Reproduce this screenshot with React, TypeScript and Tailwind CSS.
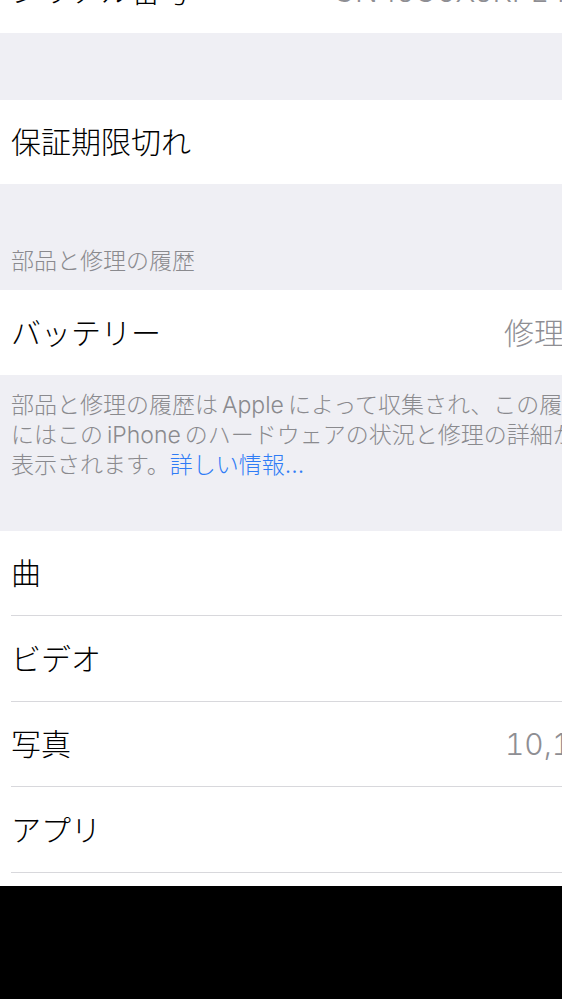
import React from "react";

const font = { fontFamily: 'Inter, "Noto Sans CJK JP", "Noto Sans", sans-serif' };

function Row({ label, value, sep = false, h = "h-[85px]", pr = "pr-[16px]" }: { label: string; value?: string; sep?: boolean; h?: string; pr?: string }) {
  return (
    <div className="bg-white pl-[11px]">
      <div className={`flex items-center justify-between ${pr} ${h} ${sep ? "border-b border-[#d8d8dc]" : ""}`}>
        <span className="text-[30px] leading-none font-light text-black whitespace-nowrap">{label}</span>
        {value ? <span className="text-[30px] leading-none font-light tabular-nums text-[#8e8e93] whitespace-nowrap">{value}</span> : null}
      </div>
    </div>
  );
}

export default function App() {
  return (
    <div className="w-[562px] h-[999px] overflow-hidden bg-black" style={font}>
      <div className="w-[640px] flex flex-col bg-[#efeff4]">
        <div className="-mt-[52px]">
          <Row label="シリアル番号" value="GN4JC6XJKPL4" pr="pr-[73px]" />
        </div>
        <div className="h-[67px]" />
        <Row label="保証期限切れ" h="h-[84px]" />
        <div className="h-[106px] flex items-end pl-[11px] pb-[14px]">
          <span className="text-[23px] leading-[30px] font-light text-[#8a8a8e]">部品と修理の履歴</span>
        </div>
        <Row label="バッテリー" value="修理済み" />
        <div className="h-[156px] pl-[11px] pt-[15px]">
          <p className="text-[23px] leading-[30px] font-light text-[#8a8a8e] whitespace-nowrap">
            部品と修理の履歴は<span className="mx-[4px]">Apple</span>によって収集され、この履歴
            <br />
            にはこの<span className="mx-[4px]">iPhone</span>のハードウェアの状況と修理の詳細が
            <br />
            表示されます。<span className="text-[#2f7cf6]">詳しい情報...</span>
          </p>
        </div>
        <Row label="曲" value="0" sep />
        <Row label="ビデオ" value="0" sep h="h-[86px]" />
        <Row label="写真" value="10,123" sep pr="pr-[30px]" />
        <Row label="アプリ" value="86" sep h="h-[86px]" />
        <div className="h-[13px] bg-white" />
      </div>
    </div>
  );
}
